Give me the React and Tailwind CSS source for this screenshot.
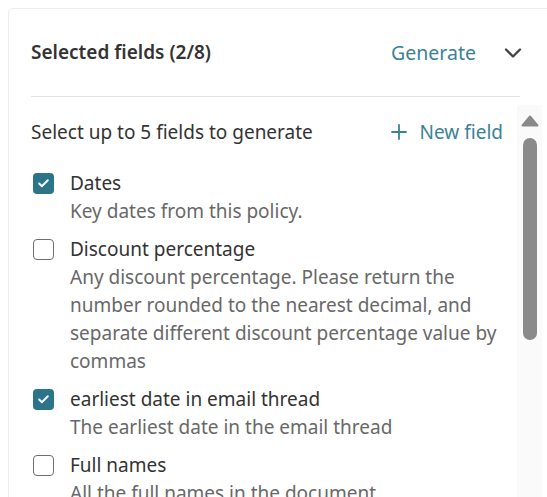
import { Plus, ChevronDown, Check } from "lucide-react";

const FIELDS = [
  { name: "Dates", desc: "Key dates from this policy.", checked: true },
  {
    name: "Discount percentage",
    desc: "Any discount percentage. Please return the number rounded to the nearest decimal, and separate different discount percentage value by commas",
    checked: false,
  },
  { name: "earliest date in email thread", desc: "The earliest date in the email thread", checked: true },
  { name: "Full names", desc: "All the full names in the document", checked: false },
];

function Box({ checked }) {
  if (checked) {
    return (
      <div className="w-[21px] h-[21px] rounded-[4px] bg-[#2b7489] flex items-center justify-center shrink-0">
        <Check size={13} strokeWidth={3.5} className="text-white" />
      </div>
    );
  }
  return <div className="w-[21px] h-[21px] rounded-[4px] border-[1.5px] border-[#6e6e6e] bg-white shrink-0" />;
}

export default function App() {
  return (
    <div className="h-[497px] overflow-hidden bg-white font-['Noto_Sans',sans-serif]">
      <div className="ml-2 mt-2 w-[570px] h-[600px] border border-[#ececec] rounded-[5px]">
        <div className="pl-[22px]">
          <div className="h-[87px] w-[496px] flex items-center">
            <h2 className="text-[19px] font-semibold text-[#333]">Selected fields (2/8)</h2>
            <button className="ml-auto text-[19.5px] text-[#3a8297]">Generate</button>
            <ChevronDown size={28} strokeWidth={2} className="ml-[23px] text-[#444]" />
          </div>
          <div className="w-[489px] h-px bg-[#e3e3e3]" />
        </div>

        <div className="flex">
          <div className="w-[494px] pl-[22px] pt-[21px]">
            <div className="flex items-center leading-[28px] text-[19px]">
              <span className="text-[#333]">Select up to 5 fields to generate</span>
              <button className="ml-auto flex items-center gap-[9px] text-[#3a8297]">
                <Plus size={24} strokeWidth={1.8} />
                New field
              </button>
            </div>
            <ul className="mt-[23px] flex flex-col gap-[10px]">
              {FIELDS.map((f) => (
                <li key={f.name} className="flex gap-[16px] pl-[2px] leading-[28px] text-[19px]">
                  <div className="h-[28px] flex items-center">
                    <Box checked={f.checked} />
                  </div>
                  <div>
                    <div className="text-[#333]">{f.name}</div>
                    <div className="text-[#686868]">{f.desc}</div>
                  </div>
                </li>
              ))}
            </ul>
          </div>
          <div className="ml-[14px] mt-[8px] w-[25px] h-[500px] bg-[#fafafa] flex flex-col items-center pt-[10px]">
            <svg width="18" height="12" viewBox="0 0 18 12">
              <path d="M9 1.5 L16.5 10.5 H1.5 Z" fill="#8a8a8a" stroke="#8a8a8a" strokeWidth="2" strokeLinejoin="round" />
            </svg>
            <div className="mt-[11px] w-[14px] h-[202px] rounded-full bg-[#8a8a8a]" />
          </div>
        </div>
      </div>
    </div>
  );
}
